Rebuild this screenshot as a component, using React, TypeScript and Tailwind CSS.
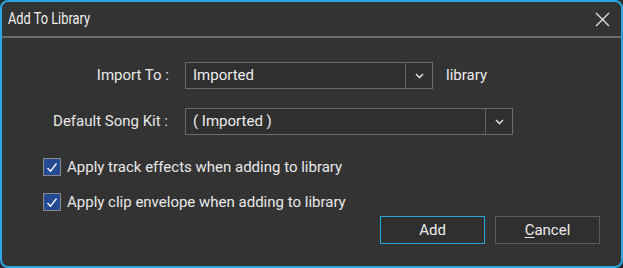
import React from "react";

function Chevron() {
  return (
    <svg width="9" height="6" viewBox="0 0 9 6" className="block">
      <path d="M1 1 L4.5 4.5 L8 1" fill="none" stroke="#d8d8d8" strokeWidth="1.6" />
    </svg>
  );
}

function Select({ value, width }: { value: string; width: string }) {
  return (
    <div className={`flex h-[27px] ${width} border border-[#6b6b6b] bg-[#2f2f2f]`}>
      <div className="flex-1 flex items-center pl-[7px] text-[15px] text-[#ececec]">{value}</div>
      <div className="w-[27px] flex items-center justify-center border-l border-[#5f5f5f]">
        <Chevron />
      </div>
    </div>
  );
}

function Check({ label }: { label: string }) {
  return (
    <div className="flex items-center h-[18px] gap-[6px] pl-[41px]">
      <div className="w-[18px] h-[18px] border border-[#8a8a8a] bg-[#244a93] flex items-center justify-center">
        <svg width="12" height="11" viewBox="0 0 12 11">
          <path d="M1.5 6 L4.5 9.2 L10.5 1.5" fill="none" stroke="#ffffff" strokeWidth="1.3" />
        </svg>
      </div>
      <span className="text-[15px] leading-[18px] text-[#e8e8e8]">{label}</span>
    </div>
  );
}

export default function App() {
  return (
    <div
      className="w-[623px] h-[268px] bg-[#2a2a2a]"
      style={{ fontFamily: "Roboto, 'Noto Sans', sans-serif" }}
    >
      <div className="w-[623px] h-[268px] border-2 border-[#2aa6e2] rounded-[8px] bg-[#333333] flex flex-col overflow-hidden">
        <div className="h-[36px] shrink-0 flex items-center justify-between pl-[6px] pr-[11px] border-b-2 border-[#6c6c6c]">
          <span className="inline-block origin-left scale-x-[0.8] text-[16px] text-[#f0f0f0]">Add To Library</span>
          <svg width="15" height="15" viewBox="0 0 15 15">
            <path d="M1 1 L14 14 M14 1 L1 14" stroke="#e0e0e0" strokeWidth="1.4" />
          </svg>
        </div>
        <div className="flex flex-col pt-[24px]">
          <div className="flex items-center">
            <div className="w-[167px] text-right text-[15px] text-[#e8e8e8]">Import To :</div>
            <div className="ml-[16px]">
              <Select value="Imported" width="w-[248px]" />
            </div>
            <span className="ml-[13px] text-[15px] text-[#ececec]">library</span>
          </div>
          <div className="flex items-center mt-[19px]">
            <div className="w-[166px] text-right text-[15px] text-[#e8e8e8]">Default Song Kit :</div>
            <div className="ml-[17px]">
              <Select value="( Imported )" width="w-[328px]" />
            </div>
          </div>
          <div className="mt-[23px] flex flex-col gap-[17px]">
            <Check label="Apply track effects when adding to library" />
            <Check label="Apply clip envelope when adding to library" />
          </div>
          <div className="flex justify-end gap-[10px] pr-[21px] mt-[5px]">
            <button className="w-[105px] h-[28px] border border-[#2aa6e2] bg-[#2f2f2f] text-[15px] text-[#ececec]">
              Add
            </button>
            <button className="w-[105px] h-[28px] border border-[#5a5a5a] bg-[#2f2f2f] text-[15px] text-[#ececec]">
              <u className="underline-offset-2">C</u>ancel
            </button>
          </div>
        </div>
      </div>
    </div>
  );
}
